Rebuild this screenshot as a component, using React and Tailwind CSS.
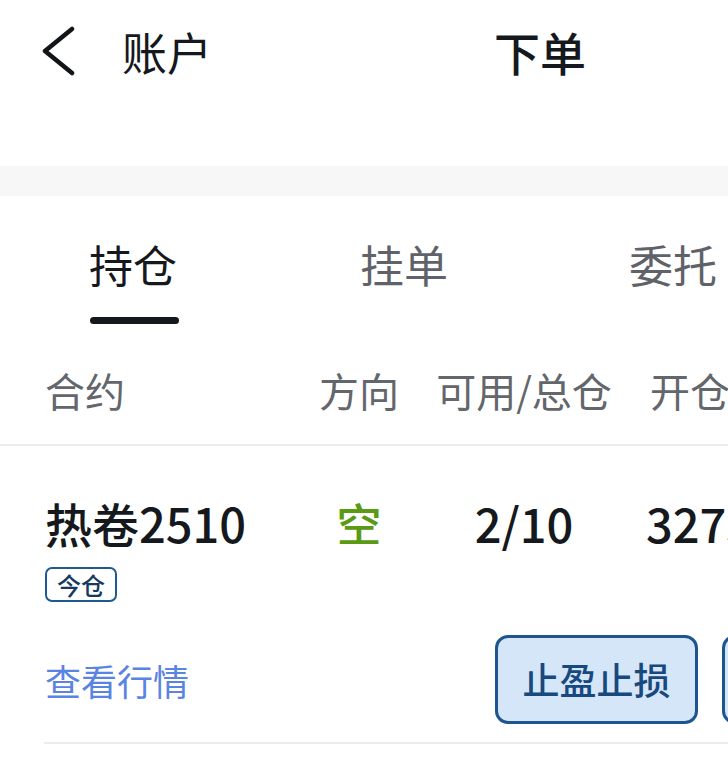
import React from "react";

const FONT = { fontFamily: '"Noto Sans CJK SC", "Noto Sans", sans-serif' };

function BackIcon() {
  return (
    <svg width="36" height="50" viewBox="0 0 36 50" fill="none">
      <path d="M32 3L5 25l27 22" stroke="#111418" strokeWidth="4.5" strokeLinecap="round" strokeLinejoin="round" />
    </svg>
  );
}

export default function App() {
  return (
    <div style={FONT} className="w-[728px] h-[772px] overflow-hidden bg-white text-[#15181d]">
      {/* Header */}
      <div className="h-[102px] flex items-center">
        <div className="ml-[40px] w-[36px] flex items-center">
          <BackIcon />
        </div>
        <span className="ml-[46px] text-[45px] leading-none">账户</span>
        <span className="ml-[282px] text-[46px] leading-none font-medium">下单</span>
      </div>
      <div className="h-[64px]" />
      <div className="h-[30px] bg-[#f7f7f7]" />

      {/* Tabs */}
      <div className="flex pl-[89px] gap-[181px] whitespace-nowrap">
        <div className="flex flex-col">
          <div className="mt-[43px] h-[50px] leading-[50px] text-[44px]">持仓</div>
          <div className="mt-[28px] ml-[1px] h-[7px] w-[89px] rounded-full bg-[#15181d]" />
        </div>
        <div className="mt-[43px] h-[50px] leading-[50px] text-[44px] text-[#5f6268]">挂单</div>
        <div className="mt-[43px] h-[50px] leading-[50px] text-[44px] text-[#5f6268]">委托</div>
      </div>

      {/* Column header */}
      <div className="h-[122px] pt-[12px] flex items-center pl-[45px] text-[40px] text-[#63666b] whitespace-nowrap border-b-2 border-[#ebebeb]">
        <div className="w-[255px] shrink-0">合约</div>
        <div className="w-[118px] shrink-0 text-center">方向</div>
        <div className="w-[212px] shrink-0 text-center">可用/总仓</div>
        <div className="pl-[20px] shrink-0">开仓均价</div>
      </div>

      {/* Position row */}
      <div className="ml-[44px] border-b-2 border-[#ececec] pb-[18px]">
        <div className="mt-[50px] h-[52px] flex items-center pl-[1px] whitespace-nowrap font-medium">
          <div className="w-[255px] shrink-0 text-[47px] leading-none">热卷2510</div>
          <div className="w-[118px] shrink-0 text-center text-[45px] leading-none text-[#5b9a14]">空</div>
          <div className="w-[212px] shrink-0 text-center text-[47px] leading-none">2/10</div>
          <div className="pl-[16px] shrink-0 text-[47px] leading-none">3275.0</div>
        </div>
        <div className="mt-[19px] ml-[1px] h-[35px] w-[72px] flex items-center justify-center rounded-[7px] border-2 border-[#1d5a8f] text-[24px] leading-none font-medium text-[#173a60]">
          今仓
        </div>
        <div className="mt-[33px] flex items-center whitespace-nowrap">
          <div className="w-[451px] shrink-0 pl-[1px] text-[36px] leading-none text-[#5a84e2]">查看行情</div>
          <button className="w-[203px] h-[89px] shrink-0 rounded-[13px] border-[3px] border-[#1c5590] bg-[#d5e6f8] text-[37px] leading-none font-medium text-[#18497e]">
            止盈止损
          </button>
          <button className="ml-[24px] w-[202px] h-[89px] shrink-0 rounded-[13px] border-[3px] border-[#1c5590] bg-[#d5e6f8] text-[37px] leading-none font-medium text-[#18497e]">
            平仓
          </button>
        </div>
      </div>
    </div>
  );
}
